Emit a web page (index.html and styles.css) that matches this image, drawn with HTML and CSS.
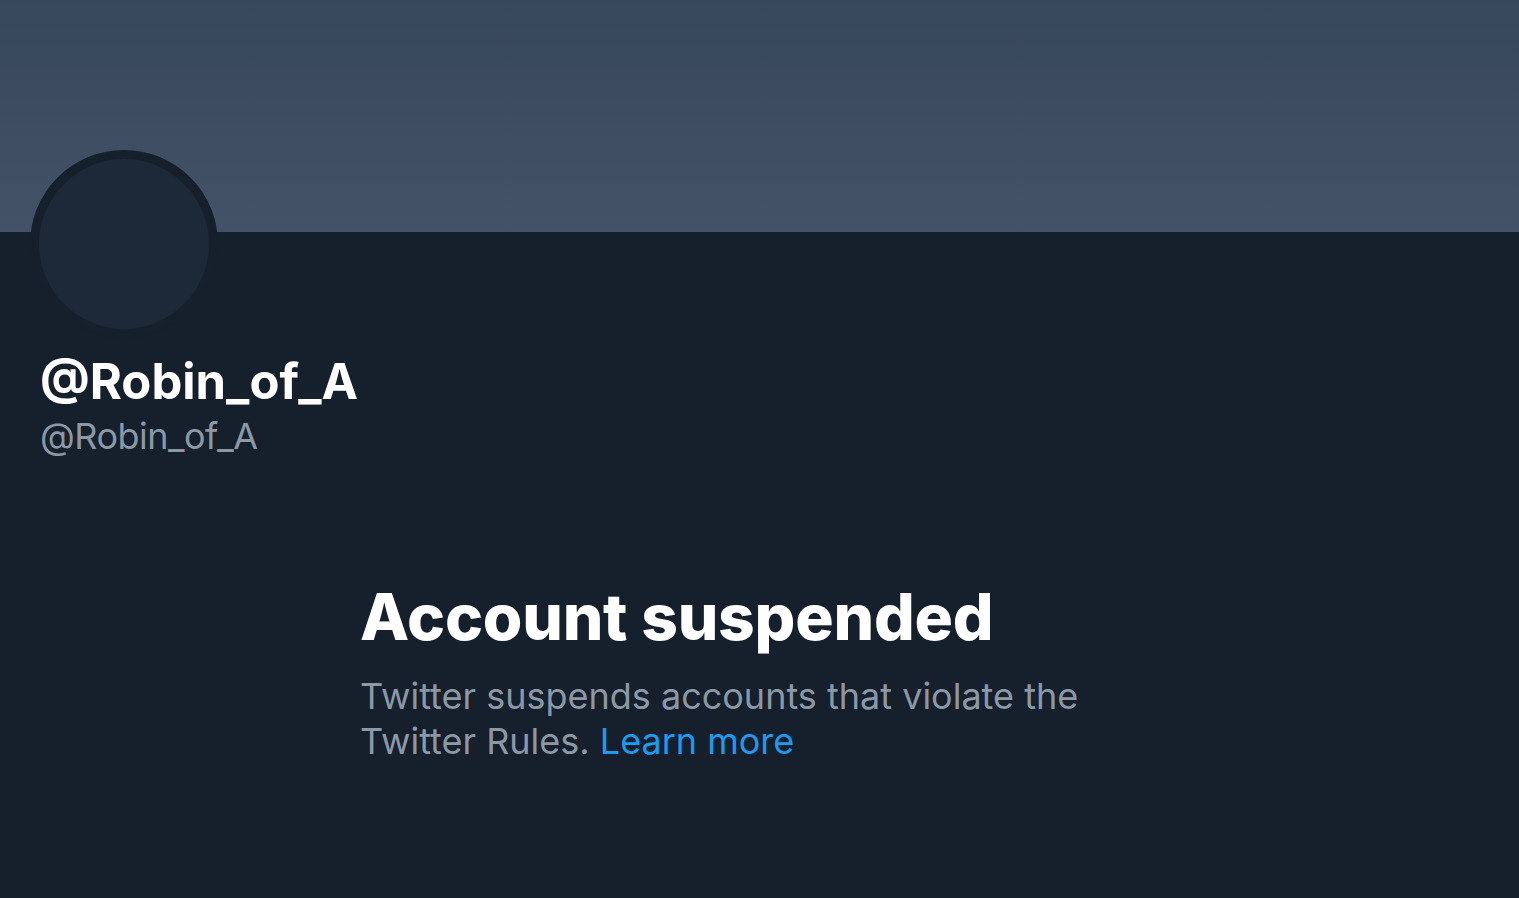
FILE: index.html
```html
<!DOCTYPE html>
<html lang="en">
<head>
  <meta charset="UTF-8" />
  <title>@Robin_of_A</title>
  <meta name="viewport" content="width=device-width, initial-scale=1.0" />
  <link rel="stylesheet" href="styles.css">
</head>
<body>

  <div class="banner"></div>

  <div class="profile">
    <div class="avatar"></div>
    <h1 class="name">@Robin_of_A</h1>
    <p class="handle">@Robin_of_A</p>
  </div>

  <div class="notice">
    <h2>Account suspended</h2>
    <p>Twitter suspends accounts that violate the Twitter Rules. <a href="#">Learn more</a></p>
  </div>

</body>
</html>
```

FILE: styles.css
```css
body {
  margin: 0;
  padding: 0;
  height: 100vh;
  background: #161f2c;
  overflow: hidden;
  font-family: 'Inter', 'Noto Sans', sans-serif;
}

.banner {
  height: 232px;
  background: linear-gradient(180deg, #37475a 0%, #445268 100%);
}

.profile {
  padding: 0 40px;
}

.avatar {
  width: 170px;
  height: 170px;
  margin: -82px 0 0 -10px;
  border: 9px solid #16202c;
  border-radius: 50%;
  background: #1d2838;
}

.name {
  margin: 15px 0 0;
  font-size: 49px;
  font-weight: 700;
  line-height: 58px;
  color: #ffffff;
  letter-spacing: 0;
}

.handle {
  margin: 3px 0 0;
  font-size: 36px;
  line-height: 44px;
  color: #8b98a5;
  letter-spacing: -0.5px;
}

.notice {
  width: 740px;
  margin: 120px 0 0 360px;
}

.notice h2 {
  margin: 0;
  font-size: 64px;
  font-weight: 800;
  line-height: 78px;
  color: #ffffff;
  letter-spacing: -0.2px;
}

.notice p {
  margin: 18px 0 0;
  font-size: 36px;
  line-height: 45px;
  color: #8b98a5;
}

.notice a {
  color: #1d9bf0;
  text-decoration: none;
}
```
